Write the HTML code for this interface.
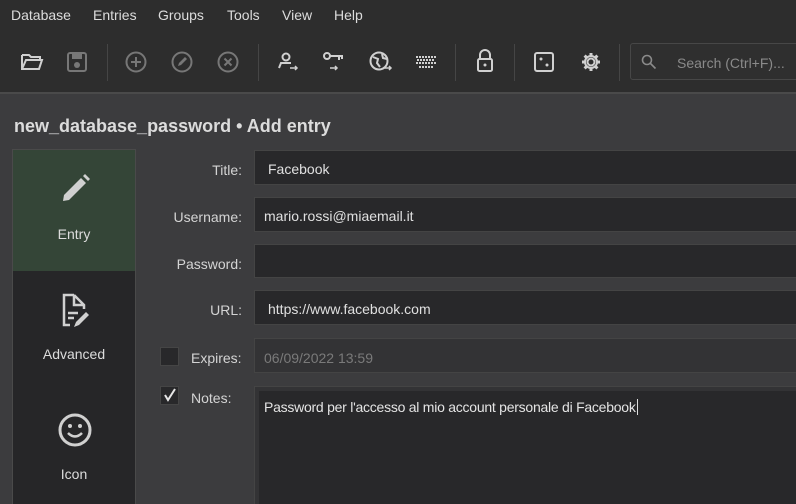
<!DOCTYPE html>
<html style="overflow:hidden;width:796px;height:504px"><head><style>
*{margin:0;padding:0;box-sizing:border-box}
body{width:796px;height:504px;overflow:hidden;background:#3c3c3e;font-family:"Liberation Sans",sans-serif;color:#d6d6d6;position:relative;font-size:14px}
.top{position:absolute;left:0;top:0;width:796px;height:94px;background:#2d2d2d;border-bottom:2px solid #4a4a4a}
.menu span{position:absolute;top:7px;font-size:14px;color:#dcdcdc}
.sep{position:absolute;top:44px;width:1px;height:37px;background:#454545}
.ic{position:absolute;top:51px}
.search{position:absolute;left:630px;top:43px;width:180px;height:37px;border:1px solid #474747;border-radius:3px;background:#2f2f2f;color:#8a8a8a;font-size:14px}
.title{position:absolute;left:14px;top:116px;font-size:18px;font-weight:bold;color:#dcdcdc}
.side{position:absolute;left:12px;top:149px;width:124px;height:360px;background:#262628;border:1px solid #4a4a4a}
.sel{position:absolute;left:0;top:0;width:122px;height:121px;background:#344537}
.side .lbl{position:absolute;width:122px;text-align:center;font-size:14px;color:#dcdcdc}
.l{position:absolute;right:554px;font-size:14px;color:#d4d4d4}
.l2{position:absolute;left:191px;font-size:14px;color:#d4d4d4}
.f{position:absolute;left:254px;width:560px;background:#28282a;border:1px solid #444;font-size:14px;color:#e0e0e0;padding-left:13px;overflow:hidden}
.cb{position:absolute;left:160px;width:19px;height:19px;background:#28282a;border:1px solid #454545}
</style></head><body>
<div class="top">
<div class="menu"><span style="left:11px">Database</span><span style="left:93px">Entries</span><span style="left:158px">Groups</span><span style="left:227px">Tools</span><span style="left:282px">View</span><span style="left:334px">Help</span></div>
<svg class="ic" style="left:20px" width="24" height="22" viewBox="0 0 24 22"><path d="M2 4h7l2 2h9v3M2 4v14h17l3-9H6l-4 9" fill="none" stroke="#d0d0d0" stroke-width="2"/></svg>
<svg class="ic" style="left:66px" width="22" height="22" viewBox="0 0 22 22"><rect x="2" y="2" width="18" height="18" rx="2" fill="none" stroke="#777" stroke-width="2"/><rect x="6" y="3" width="10" height="5" fill="#777"/><circle cx="11" cy="14" r="3" fill="#777"/></svg>
<div class="sep" style="left:107px"></div>
<svg class="ic" style="left:125px" width="22" height="22" viewBox="0 0 22 22"><circle cx="11" cy="11" r="9.5" fill="none" stroke="#777" stroke-width="2"/><path d="M11 6v10M6 11h10" stroke="#777" stroke-width="2"/></svg>
<svg class="ic" style="left:171px" width="22" height="22" viewBox="0 0 22 22"><circle cx="11" cy="11" r="9.5" fill="none" stroke="#777" stroke-width="2"/><path d="M7 15l1-3 6-6 2 2-6 6z" fill="#777"/></svg>
<svg class="ic" style="left:217px" width="22" height="22" viewBox="0 0 22 22"><circle cx="11" cy="11" r="9.5" fill="none" stroke="#777" stroke-width="2"/><path d="M7.5 7.5l7 7M14.5 7.5l-7 7" stroke="#777" stroke-width="2"/></svg>
<div class="sep" style="left:258px"></div>
<svg class="ic" style="left:276px" width="24" height="22" viewBox="0 0 24 22"><circle cx="10" cy="6" r="3.5" fill="none" stroke="#d0d0d0" stroke-width="2"/><path d="M3 17l2-5h10" fill="none" stroke="#d0d0d0" stroke-width="2"/><path d="M14 17h7M19 15l2 2-2 2" stroke="#d0d0d0" stroke-width="1.5" fill="none"/></svg>
<svg class="ic" style="left:322px" width="24" height="22" viewBox="0 0 24 22"><circle cx="5" cy="5" r="3" fill="none" stroke="#d0d0d0" stroke-width="2"/><path d="M8 5h13M17 5v4M20 5v3" stroke="#d0d0d0" stroke-width="2"/><path d="M8 17h7M13 15l2 2-2 2" stroke="#d0d0d0" stroke-width="1.5" fill="none"/></svg>
<svg class="ic" style="left:369px" width="24" height="22" viewBox="0 0 24 22"><circle cx="10" cy="10" r="8.5" fill="none" stroke="#d0d0d0" stroke-width="2"/><path d="M4 6l5 2-1 4 3 4M13 3l1 4 4 1" fill="none" stroke="#d0d0d0" stroke-width="2"/><path d="M14 17h8M20 15l2 2-2 2" stroke="#d0d0d0" stroke-width="1.5" fill="none"/></svg>
<svg class="ic" style="left:415px;top:55px" width="22" height="14" viewBox="0 0 22 14"><path d="M1 2h20M2 5h18M1 8h20M4 12h14" stroke="#d0d0d0" stroke-width="2" stroke-dasharray="2 1"/></svg>
<div class="sep" style="left:455px"></div>
<svg class="ic" style="left:476px;top:49px" width="18" height="24" viewBox="0 0 18 24"><path d="M4 10V6a5 5 0 0 1 10 0v4" fill="none" stroke="#d0d0d0" stroke-width="2"/><rect x="2" y="10" width="14" height="12" rx="1.5" fill="none" stroke="#d0d0d0" stroke-width="2"/><circle cx="9" cy="16" r="1.5" fill="#d0d0d0"/></svg>
<div class="sep" style="left:514px"></div>
<svg class="ic" style="left:533px" width="22" height="22" viewBox="0 0 22 22"><rect x="2" y="2" width="18" height="18" rx="2" fill="none" stroke="#d0d0d0" stroke-width="2"/><circle cx="8" cy="8" r="1.5" fill="#d0d0d0"/><circle cx="14" cy="14" r="1.5" fill="#d0d0d0"/></svg>
<svg class="ic" style="left:580px" width="22" height="22" viewBox="0 0 22 22"><circle cx="11" cy="11" r="3.5" fill="none" stroke="#d0d0d0" stroke-width="2"/><path d="M11 2v4M11 16v4M2 11h4M16 11h4M4.6 4.6l2.8 2.8M14.6 14.6l2.8 2.8M4.6 17.4l2.8-2.8M14.6 7.4l2.8-2.8" stroke="#d0d0d0" stroke-width="3"/><circle cx="11" cy="11" r="6" fill="none" stroke="#d0d0d0" stroke-width="2"/></svg>
<div class="sep" style="left:619px"></div>
<div class="search"><svg style="position:absolute;left:10px;top:10px" width="16" height="16" viewBox="0 0 16 16"><circle cx="6" cy="6" r="4.5" fill="none" stroke="#8a8a8a" stroke-width="1.6"/><path d="M9.5 9.5l5 5" stroke="#8a8a8a" stroke-width="1.6"/></svg><span style="position:absolute;left:46px;top:11px">Search (Ctrl+F)...</span></div>
</div>
<div class="title">new_database_password • Add entry</div>
<div class="side">
<div class="sel"></div>
<svg style="position:absolute;left:47px;top:23px" width="30" height="30" viewBox="0 0 30 30"><path d="M3 28l1-6L21 5l5 5L9 27z" fill="#d0d0d0"/><path d="M23 3l2-2 5 5-2 2z" fill="#d0d0d0"/></svg>
<div class="lbl" style="top:76px">Entry</div>
<svg style="position:absolute;left:47px;top:143px" width="32" height="36" viewBox="0 0 32 36"><path d="M14 2H4v30h6M14 2l10 10v4M14 2v10h10" fill="none" stroke="#d0d0d0" stroke-width="2.5"/><path d="M8 20h10M8 25h6" stroke="#d0d0d0" stroke-width="2.5"/><path d="M14 34l2-5 10-10 3 3-10 10z" fill="#d0d0d0"/></svg>
<div class="lbl" style="top:196px">Advanced</div>
<svg style="position:absolute;left:44px;top:262px" width="36" height="36" viewBox="0 0 36 36"><circle cx="18" cy="18" r="15" fill="none" stroke="#d0d0d0" stroke-width="3"/><circle cx="13" cy="14" r="2" fill="#d0d0d0"/><circle cx="23" cy="14" r="2" fill="#d0d0d0"/><path d="M11 21q7 7 14 0" fill="none" stroke="#d0d0d0" stroke-width="2.5"/></svg>
<div class="lbl" style="top:316px">Icon</div>
</div>
<div class="l" style="top:162px">Title:</div>
<div class="f" style="top:150px;height:35px;line-height:36px">Facebook</div>
<div class="l" style="top:209px">Username:</div>
<div class="f" style="top:197px;height:35px;line-height:36px;padding-left:9px">mario.rossi@miaemail.it</div>
<div class="l" style="top:256px">Password:</div>
<div class="f" style="top:244px;height:34px"></div>
<div class="l" style="top:302px">URL:</div>
<div class="f" style="top:290px;height:35px;line-height:37px">https://www.facebook.com</div>
<div class="cb" style="top:347px"></div>
<div class="l2" style="top:350px">Expires:</div>
<div class="f" style="top:338px;height:35px;line-height:38px;background:#333335;color:#7a7a7a;padding-left:9px">06/09/2022 13:59</div>
<div class="cb" style="top:386px"></div>
<svg style="position:absolute;left:163px;top:388px" width="14" height="14" viewBox="0 0 14 14"><path d="M2 7l3 5L12 1" fill="none" stroke="#e6e6e6" stroke-width="2"/></svg>
<div class="l2" style="top:390px">Notes:</div>
<div class="f" style="top:386px;height:118px;background:#333335;padding:4px 0 0 4px;border-bottom:none"><div style="background:#28282a;height:120px;padding:8px 0 0 5px;color:#e4e4e4;letter-spacing:-0.25px">Password per l'accesso al mio account personale di Facebook<span style="border-left:1px solid #ddd;margin-left:1px"></span></div></div>
</body></html>
